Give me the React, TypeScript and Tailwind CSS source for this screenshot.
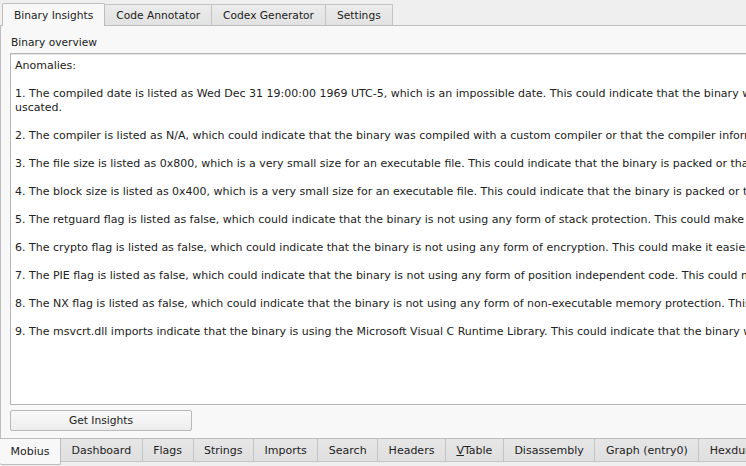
import React from 'react';

const topTabs = ['Binary Insights', 'Code Annotator', 'Codex Generator', 'Settings'];

const bottomTabs: React.ReactNode[] = [
  'Mobius',
  'Dashboard',
  'Flags',
  'Strings',
  'Imports',
  'Search',
  'Headers',
  <>
    <span className="underline">V</span>Table
  </>,
  'Disassembly',
  'Graph (entry0)',
  'Hexdump',
];

const report = [
  'Anomalies:',
  '',
  '1. The compiled date is listed as Wed Dec 31 19:00:00 1969 UTC-5, which is an impossible date. This could indicate that the binary was obf',
  'uscated.',
  '',
  '2. The compiler is listed as N/A, which could indicate that the binary was compiled with a custom compiler or that the compiler information was stripped.',
  '',
  '3. The file size is listed as 0x800, which is a very small size for an executable file. This could indicate that the binary is packed or that it is a stub.',
  '',
  '4. The block size is listed as 0x400, which is a very small size for an executable file. This could indicate that the binary is packed or that it is a stub.',
  '',
  '5. The retguard flag is listed as false, which could indicate that the binary is not using any form of stack protection. This could make it easier to exploit.',
  '',
  '6. The crypto flag is listed as false, which could indicate that the binary is not using any form of encryption. This could make it easier to reverse engineer.',
  '',
  '7. The PIE flag is listed as false, which could indicate that the binary is not using any form of position independent code. This could make it easier to exploit.',
  '',
  '8. The NX flag is listed as false, which could indicate that the binary is not using any form of non-executable memory protection. This could make it easier to exploit.',
  '',
  '9. The msvcrt.dll imports indicate that the binary is using the Microsoft Visual C Runtime Library. This could indicate that the binary was compiled with Visual Studio.',
];

export default function App() {
  return (
    <div
      className="w-[746px] h-[466px] overflow-hidden flex flex-col bg-[#efefef] text-[#222] text-[10.67px]"
      style={{ fontFamily: '"DejaVu Sans", "Liberation Sans", sans-serif' }}
    >
      {/* top tabs */}
      <div className="h-[25px] shrink-0 flex items-end pl-[2px]">
        {topTabs.map((t, i) =>
          i === 0 ? (
            <div
              key={t}
              className="relative z-10 -mb-px h-[23px] px-[11px] pt-px flex items-center bg-[#f8f8f8] border border-b-0 border-[#bdbdbd] rounded-t-[2px] whitespace-nowrap"
            >
              {t}
            </div>
          ) : (
            <div
              key={t}
              className="-ml-px h-[21px] px-[11px] pt-px flex items-center bg-gradient-to-b from-[#ebebeb] to-[#e2e2e2] border border-b-0 border-[#c4c4c4] whitespace-nowrap"
            >
              {t}
            </div>
          )
        )}
      </div>

      {/* pane */}
      <div className="flex-1 min-h-0 flex flex-col bg-[#f8f8f8] border-y border-l border-[#bdbdbd] pl-[9px] pt-[10px] pb-[7px]">
        <div className="h-[14px] leading-[14px] pl-px whitespace-nowrap">Binary overview</div>
        <div className="mt-[3px] flex-1 min-h-0 -mr-[60px] bg-white border border-[#b5b5b5] shadow-[inset_0_1px_0_#e4e4e4] overflow-hidden pt-[5px] pl-[4px] text-[11px]">
          {report.map((line, i) => (
            <div key={i} className="h-[14px] leading-[14px] whitespace-nowrap">
              {line}
            </div>
          ))}
        </div>
        <button className="mt-[5px] w-[182px] h-[21px] shrink-0 flex items-center justify-center rounded-[2px] border border-[#b9b9b9] bg-gradient-to-b from-[#f9f9f9] to-[#ededed]">
          Get Insights
        </button>
      </div>

      {/* bottom tabs */}
      <div className="h-[27px] shrink-0 flex items-start overflow-hidden text-[11px]">
        {bottomTabs.map((t, i) =>
          i === 0 ? (
            <div
              key={i}
              className="relative z-10 -mt-px h-[27px] shrink-0 px-[10.5px] pt-[2px] flex items-center bg-[#f8f8f8] border border-t-0 border-l-0 border-[#bdbdbd] rounded-b-[2px] whitespace-nowrap"
            >
              {t}
            </div>
          ) : (
            <div
              key={i}
              className="-ml-px h-[23px] shrink-0 px-[10.5px] pt-[3px] flex items-center bg-gradient-to-b from-[#e6e6e6] to-[#e0e0e0] border border-t-0 border-[#c4c4c4] whitespace-nowrap"
            >
              {t}
            </div>
          )
        )}
      </div>
    </div>
  );
}
